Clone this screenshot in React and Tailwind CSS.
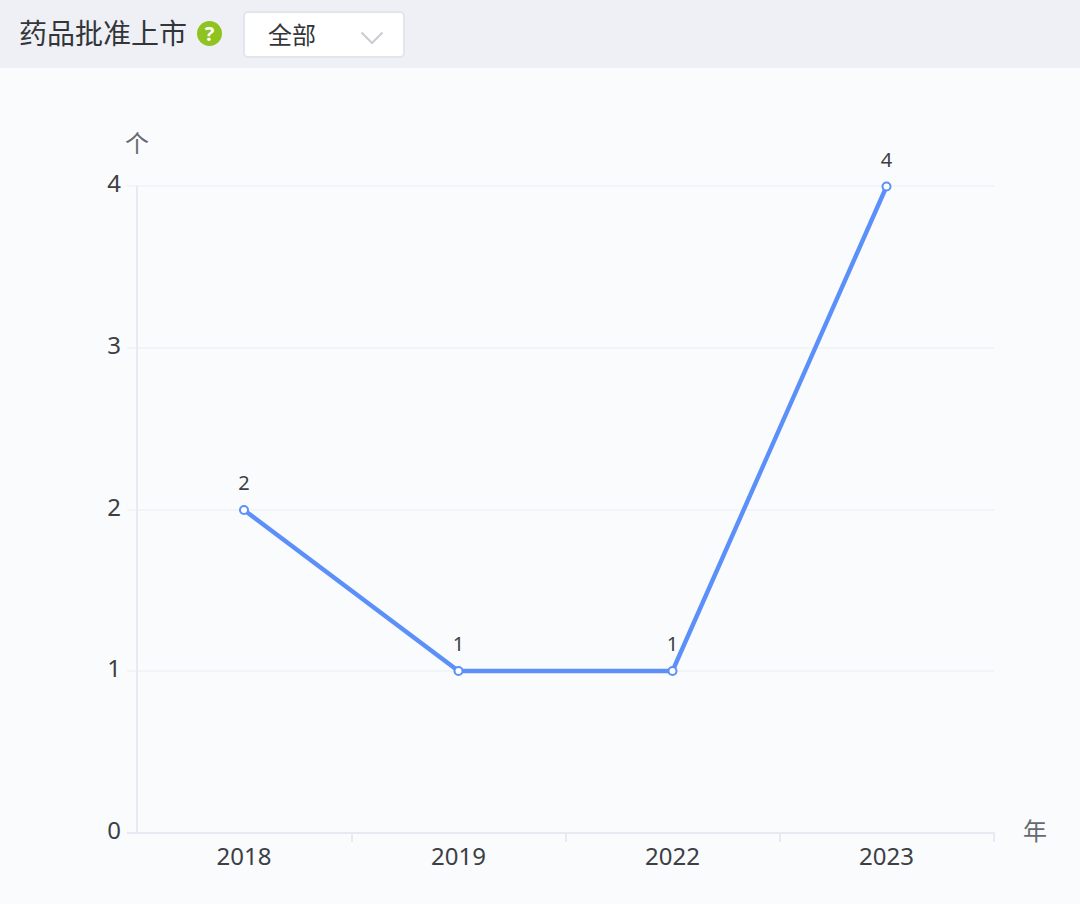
const FONT = '"Noto Sans", "Noto Sans CJK SC", sans-serif';
const gridY = [186, 348, 510, 671];
const xTicks = [352, 566, 780, 994];
const yLabels = [[4, 186], [3, 348], [2, 510], [1, 671], [0, 833]];
const pts = [[244, 510, '2'], [458.5, 671, '1'], [672.5, 671, '1'], [886.5, 186.5, '4']];
const years = [[244, '2018'], [458.5, '2019'], [672.5, '2022'], [886.5, '2023']];

function Chart() {
  return (
    <svg width="1080" height="836" viewBox="0 68 1080 836" className="block" style={{ fontFamily: FONT }}>
      {gridY.map((y) => (
        <line key={y} x1="127" x2="994" y1={y} y2={y} stroke="#f2f4f7" strokeWidth="2" />
      ))}
      <line x1="137" x2="137" y1="186" y2="833" stroke="#e6ebf3" strokeWidth="2" />
      <line x1="127" x2="995" y1="833" y2="833" stroke="#e6ebf3" strokeWidth="2" />
      {xTicks.map((x) => (
        <line key={x} x1={x} x2={x} y1="833" y2="842" stroke="#e6ebf3" strokeWidth="2" />
      ))}
      <text x="137" y="152" textAnchor="middle" fontSize="24" fill="#666a70">个</text>
      <text x="1035" y="840" textAnchor="middle" fontSize="24" fill="#666a70">年</text>
      {yLabels.map(([v, y]) => (
        <text key={v} x="121" y={y + 6} textAnchor="end" fontSize="24" fill="#3c3f44">{v}</text>
      ))}
      {years.map(([x, t]) => (
        <text key={t} x={x} y="865" textAnchor="middle" fontSize="24" fill="#3c3f44">{t}</text>
      ))}
      <polyline
        points={pts.map((p) => `${p[0]},${p[1]}`).join(' ')}
        fill="none"
        stroke="#5b8ff9"
        strokeWidth="4.4"
      />
      {pts.map(([x, y, l], i) => (
        <g key={i}>
          <circle cx={x} cy={y} r="4" fill="#ffffff" stroke="#5b8ff9" strokeWidth="2" />
          <text x={x} y={y - 20} textAnchor="middle" fontSize="20" fill="#3c3f44">{l}</text>
        </g>
      ))}
    </svg>
  );
}

export default function App() {
  return (
    <div className="w-[1080px] h-[904px] overflow-hidden bg-[#fafbfd]" style={{ fontFamily: FONT }}>
      <div className="h-[68px] bg-[#eef0f6] flex items-center pl-[19px] pb-[1px]">
        <span className="text-[28px] leading-none text-[#333539] -mt-[2px]">药品批准上市</span>
        <span className="ml-[10px] w-[25px] h-[25px] rounded-full bg-[#8fc31f] flex items-center justify-center text-white text-[20px] font-bold leading-none">?</span>
        <div className="ml-[21px] mt-[2px] w-[162px] h-[47px] bg-white border-2 border-[#e2e5ec] rounded-[5px] flex items-center justify-between pl-[23px] pr-[19px]">
          <span className="text-[24px] leading-none text-[#333539]">全部</span>
          <svg width="24" height="14" viewBox="0 0 24 14" className="mt-[7px]">
            <path d="M1.5 1.5 L12 12 L22.5 1.5" fill="none" stroke="#c9ccd3" strokeWidth="2" />
          </svg>
        </div>
      </div>
      <Chart />
    </div>
  );
}
